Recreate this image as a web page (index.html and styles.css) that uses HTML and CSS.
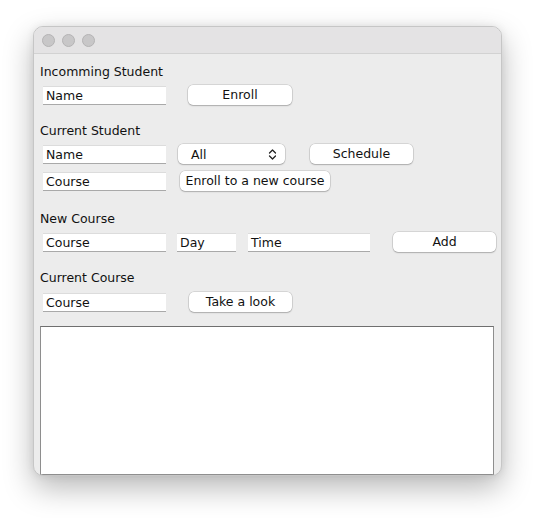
FILE: index.html
```html
<!DOCTYPE html>
<html>
<head>
<meta charset="utf-8">
<link rel="stylesheet" href="styles.css">
</head>
<body>
<div class="window">
  <div class="titlebar">
    <span class="light"></span><span class="light"></span><span class="light"></span>
  </div>
  <div class="content">
    <div class="label l1">Incomming Student</div>
    <div class="row r-tight">
      <div class="field w-main">Name</div>
      <div class="btn b-enroll">Enroll</div>
    </div>

    <div class="label l2">Current Student</div>
    <div class="row r-tight">
      <div class="field w-main">Name</div>
      <div class="select">
        <span>All</span>
        <svg class="arrows" width="9" height="11" viewBox="0 0 9 11"><path d="M1.5 4 L4.5 1 L7.5 4 M1.5 7 L4.5 10 L7.5 7" fill="none" stroke="#222" stroke-width="1.3" stroke-linecap="round" stroke-linejoin="round"/></svg>
      </div>
      <div class="btn b-schedule">Schedule</div>
    </div>
    <div class="row r-third">
      <div class="field w-main">Course</div>
      <div class="btn b-newcourse">Enroll to a new course</div>
    </div>

    <div class="label l3">New Course</div>
    <div class="row r-tight">
      <div class="field w-main">Course</div>
      <div class="field w-day">Day</div>
      <div class="field w-time">Time</div>
      <div class="btn b-add">Add</div>
    </div>

    <div class="label l4">Current Course</div>
    <div class="row r-five">
      <div class="field w-main">Course</div>
      <div class="btn b-look">Take a look</div>
    </div>

    <div class="textarea"></div>
  </div>
</div>
</body>
</html>
```

FILE: styles.css
```css
html, body {
  margin: 0;
  padding: 0;
  background: #ffffff;
}
body {
  padding: 26px 0 0 33px;
  height: 518px;
  box-sizing: border-box;
  font-family: "DejaVu Sans", "Liberation Sans", sans-serif;
  font-size: 12.5px;
  color: #111111;
}
.window {
  width: 467px;
  height: 448px;
  border: 1px solid #c6c6c6;
  border-radius: 10px;
  background: #ececec;
  box-shadow: 0 12px 30px rgba(0,0,0,0.28), 0 0 8px rgba(0,0,0,0.08);
  overflow: hidden;
  display: flex;
  flex-direction: column;
}
.titlebar {
  height: 27px;
  background: #e4e3e4;
  border-bottom: 1px solid #d2d2d2;
  display: flex;
  align-items: center;
  padding-left: 8px;
  gap: 7px;
  box-sizing: border-box;
  flex: none;
}
.light {
  width: 11px;
  height: 11px;
  border-radius: 50%;
  background: #c8c7c8;
  border: 0.5px solid #b4b3b4;
}
.content {
  display: flex;
  flex-direction: column;
  padding-left: 6px;
}
.label {
  height: 20px;
  line-height: 20px;
}
.l1 { margin-top: 8px; }
.l2 { margin-top: 16px; }
.l3 { margin-top: 18px; }
.l4 { margin-top: 16px; }
.row {
  display: flex;
  align-items: center;
  height: 20px;
  padding-left: 3px;
}
.r-tight { margin-top: 3px; }
.r-third { margin-top: 7px; }
.r-five { margin-top: 4px; }
.field {
  height: 19px;
  line-height: 18px;
  box-sizing: border-box;
  background: #ffffff;
  padding-left: 3px;
  border-top: 1px solid #dcdcdc;
  border-bottom: 1px solid #a9a9a9;
}
.w-main { width: 123px; }
.w-day { width: 59px; margin-left: 11px; }
.w-time { width: 122px; margin-left: 12px; }
.btn {
  height: 20px;
  line-height: 20px;
  background: #ffffff;
  border-radius: 5px;
  text-align: center;
  box-shadow: 0 0 0 0.5px rgba(0,0,0,0.18), 0 1px 1.5px rgba(0,0,0,0.2);
  white-space: nowrap;
}
.b-enroll { width: 104px; margin-left: 22px; }
.b-schedule { width: 103px; margin-left: 25px; }
.b-newcourse { width: 150px; margin-left: 14px; }
.b-add { width: 103px; margin-left: 23px; }
.b-look { width: 103px; margin-left: 23px; }
.select {
  width: 107px;
  height: 20px;
  margin-left: 12px;
  background: #ffffff;
  border-radius: 5px;
  box-shadow: 0 0 0 0.5px rgba(0,0,0,0.18), 0 1px 1.5px rgba(0,0,0,0.2);
  display: flex;
  align-items: center;
  justify-content: space-between;
  padding: 0 8px 0 13px;
  box-sizing: border-box;
}
.arrows { display: block; }
.textarea {
  margin-top: 14px;
  width: 454px;
  height: 149px;
  box-sizing: border-box;
  background: #ffffff;
  border: 1px solid #8e8e8e;
  border-top-color: #6f6f6f;
}
```
